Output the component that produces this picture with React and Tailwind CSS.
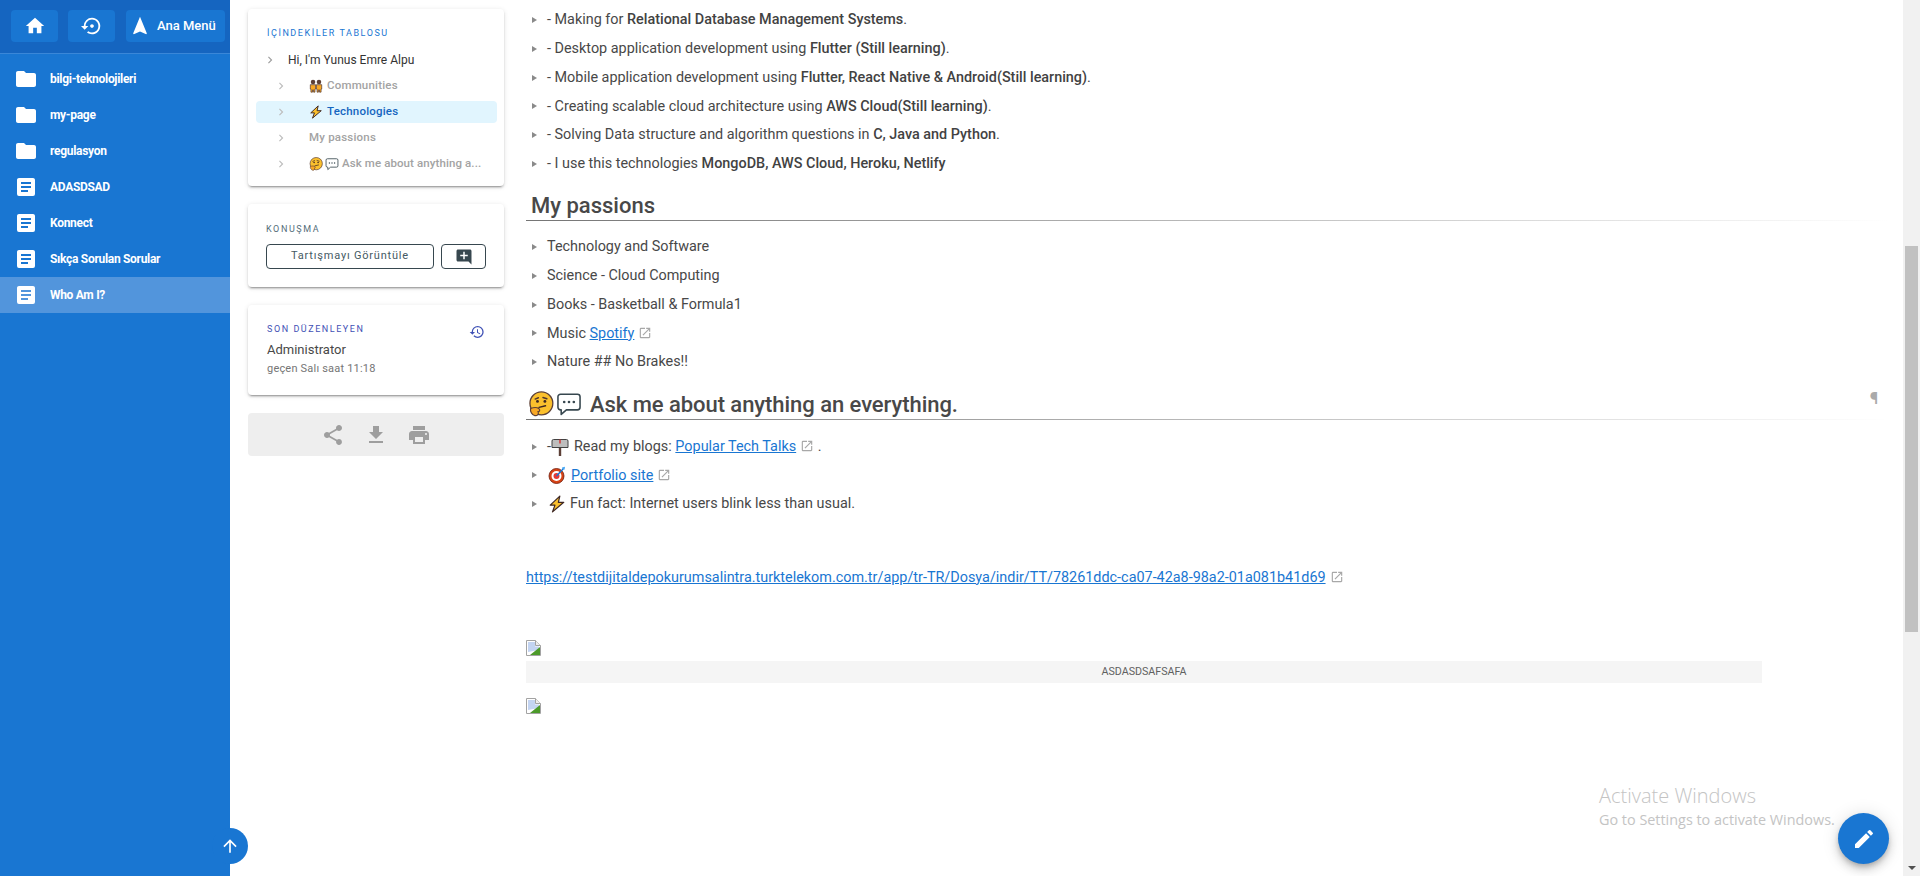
import React from "react";
import {
  MdHome, MdSettingsBackupRestore, MdNavigation, MdFolder, MdChevronRight, MdAddComment, MdHistory,
  MdShare, MdFileDownload, MdPrint, MdOpenInNew, MdEdit, MdArrowUpward,
} from "react-icons/md";

const Doc = ({ className }) => (
  <svg viewBox="0 0 24 24" className={className} fill="currentColor">
    <path d="M14 17H7v-2h7m3-2H7v-2h10m0-2H7V7h10m2-4H5c-1.11 0-2 .89-2 2v14a2 2 0 0 0 2 2h14a2 2 0 0 0 2-2V5c0-1.1-.9-2-2-2Z" />
  </svg>
);

const Bolt = ({ className }) => (
  <svg viewBox="0 0 16 16" className={className}>
    <path d="M10.5 1 2 9h4.2L4 15l10-8.5H9.2L10.5 1Z" fill="#fbc02d" stroke="#3e2723" strokeWidth="1.1" strokeLinejoin="round" />
  </svg>
);

const People = ({ className }) => (
  <svg viewBox="0 0 16 16" className={className}>
    <circle cx="4.6" cy="3.4" r="2.6" fill="#5d4037" />
    <circle cx="11.4" cy="3.4" r="2.6" fill="#5d4037" />
    <path d="M1.5 6.5h6v5H6.8v3.5H5.2v-2.5H4v2.5H2.2v-3.5h-.7v-5Z" fill="#f9a825" stroke="#4e342e" strokeWidth=".8" />
    <path d="M8.5 6.5h6v5h-.7v3.5H12v-2.5h-1.2v2.5H9.2v-3.5h-.7v-5Z" fill="#f9a825" stroke="#4e342e" strokeWidth=".8" />
  </svg>
);

const Thinking = ({ className }) => (
  <svg viewBox="0 0 20 20" className={className}>
    <circle cx="10.3" cy="9.5" r="8.8" fill="#fbc02d" stroke="#5d4037" strokeWidth="1" />
    <path d="M5.5 6.2 8 5.2M11.5 5l3 1" stroke="#4e342e" strokeWidth="1.1" fill="none" strokeLinecap="round" />
    <circle cx="7.3" cy="8" r="1.1" fill="#3e2723" />
    <circle cx="13" cy="8" r="1.1" fill="#3e2723" />
    <path d="M8.5 12.6 13.5 11.4" stroke="#3e2723" strokeWidth="1.1" strokeLinecap="round" />
    <path d="M2 13.5c2-.8 5-1 6.5.2 1 .9.3 2.2-.7 2.2 .7 1.6-.5 3.3-2.5 3-2.3-.4-3.8-3.3-3.3-5.4Z" fill="#f9a825" stroke="#5d4037" strokeWidth=".9" />
  </svg>
);

const Speech = ({ className }) => (
  <svg viewBox="0 0 20 20" className={className}>
    <path d="M3.5 2.5h13a2 2 0 0 1 2 2v8a2 2 0 0 1-2 2H8l-4 3.500v-3.500h-.5a2 2 0 0 1-2-2v-8a2 2 0 0 1 2-2Z" fill="#fff" stroke="#37474f" strokeWidth="1.2" strokeLinejoin="round" />
    <circle cx="6.3" cy="8.5" r="1" fill="#37474f" />
    <circle cx="10" cy="8.5" r="1" fill="#37474f" />
    <circle cx="13.7" cy="8.5" r="1" fill="#37474f" />
  </svg>
);

const Mailbox = ({ className }) => (
  <svg viewBox="0 0 18 18" className={className}>
    <rect x="7.8" y="9" width="2.4" height="9" fill="#5d4037" />
    <path d="M2.5 1.5h13A1.5 1.5 0 0 1 17 3v6.500H1V3a1.500 1.500 0 0 1 1.500-1.500Z" fill="#bdbdbd" stroke="#424242" strokeWidth="1" />
    <rect x="8.3" y="1.5" width="1.4" height="4" fill="#d32f2f" />
  </svg>
);

const Dart = ({ className }) => (
  <svg viewBox="0 0 18 18" className={className}>
    <circle cx="8.5" cy="10" r="7.5" fill="#d84315" stroke="#6d1b0b" strokeWidth=".8" />
    <circle cx="8.5" cy="10" r="5" fill="#fff" />
    <circle cx="8.5" cy="10" r="3" fill="#e53935" />
    <path d="M8.5 10 15.5 2.5" stroke="#1976d2" strokeWidth="1.4" />
    <path d="M14 1.5 17 .8l-.5 3-2-.8Z" fill="#42a5f5" />
  </svg>
);

const Broken = () => (
  <svg viewBox="0 0 15 16" className="block w-[15px] h-[16px]">
    <path d="M.5.5h9l5 5v10H.5Z" fill="#fff" stroke="#a3a3a3" />
    <path d="M9.5.5v5h5" fill="#eee" stroke="#a3a3a3" />
    <path d="M2 2h7v4.500h4V10L2 12Z" fill="#c3d4f2" />
    <path d="M4 15 14 7v8Z" fill="#4c9a2a" />
  </svg>
);

const Ext = () => <MdOpenInNew className="inline-block w-[14px] h-[14px] ml-[4px] text-[#a8a8a8] align-[-2px]" />;
const A = ({ children }) => <a className="text-[#1976d2] underline">{children}</a>;
const B = ({ children }) => <b className="font-medium text-[#424242]">{children}</b>;

const Li = ({ children }) => (
  <li className="flex items-center h-[28.8px] pl-[6px] whitespace-pre">
    <svg viewBox="0 0 5 6" className="w-[5px] h-[6px] mr-[10px] shrink-0"><path d="M0 0l5 3-5 3Z" fill="#8a8a8a" /></svg>
    {children}
  </li>
);

const NavItem = ({ icon: Icon, label, active }) => (
  <div className={`flex items-center h-9 pl-[14px] ${active ? "bg-[#5295dc]" : ""}`}>
    <Icon className="w-6 h-6 text-white shrink-0" />
    <span className="ml-3 text-[12px] font-bold tracking-[-0.3px] text-white">{label}</span>
  </div>
);

const shadow = "shadow-[0_3px_1px_-2px_rgba(0,0,0,0.2),0_2px_2px_0_rgba(0,0,0,0.14),0_1px_5px_0_rgba(0,0,0,0.12)]";

const TocSub = ({ active, children }) => (
  <div className={`flex items-center h-[22px] mt-1 rounded-[4px] pl-[18px] text-[11.5px] font-medium tracking-[0.2px] ${active ? "bg-[#e1f5fe] text-[#1565c0]" : "text-[#a3a3a3]"}`}>
    <MdChevronRight className="w-[14px] h-[14px] text-[#bdbdbd] shrink-0" />
    <span className="ml-[21px] flex items-center gap-[2px] whitespace-nowrap">{children}</span>
  </div>
);

export default function App() {
  return (
    <div className="relative flex h-[876px] w-[1920px] overflow-hidden bg-white text-[#484848] font-[Roboto,sans-serif]">
      <aside className="w-[230px] shrink-0 bg-[#1976d2]">
        <div className="flex items-start h-[54px] pt-[10px] pl-[11px] gap-[10px] bg-[#1565c0] border-b border-[#3a87d8]">
          <div className="w-[47px] h-8 rounded-[4px] bg-[#1976d2] flex items-center justify-center"><MdHome className="w-[22px] h-[22px] text-white" /></div>
          <div className="w-[47px] h-8 rounded-[4px] bg-[#1976d2] flex items-center justify-center"><MdSettingsBackupRestore className="w-[22px] h-[22px] text-white" /></div>
          <div className="w-[99px] h-8 ml-px rounded-[4px] bg-[#1976d2] flex items-center pl-[3px] text-white">
            <MdNavigation className="w-[22px] h-[22px]" />
            <span className="ml-[6px] text-[13px] font-medium">Ana Menü</span>
          </div>
        </div>
        <nav className="pt-[7px]">
          <NavItem icon={MdFolder} label="bilgi-teknolojileri" />
          <NavItem icon={MdFolder} label="my-page" />
          <NavItem icon={MdFolder} label="regulasyon" />
          <NavItem icon={Doc} label="ADASDSAD" />
          <NavItem icon={Doc} label="Konnect" />
          <NavItem icon={Doc} label="Sıkça Sorulan Sorular" />
          <NavItem icon={Doc} label="Who Am I?" active />
        </nav>
      </aside>

      <div className="w-[296px] shrink-0 pl-[18px] pr-[22px] pt-[9px]">
        <section className={`h-[177px] rounded-[4px] bg-white pt-[18px] pl-[8px] pr-[7px] ${shadow}`}>
          <div className="pl-[11px] h-3 flex items-center text-[9px] leading-none tracking-[1.55px] text-[#1976d2]">İÇİNDEKİLER TABLOSU</div>
          <div className="flex items-center h-[22px] mt-[10px] pl-[7px] text-[12px] text-[#333]">
            <MdChevronRight className="w-[14px] h-[14px] text-[#9e9e9e] shrink-0" />
            <span className="ml-[11px]">Hi, I'm Yunus Emre Alpu</span>
          </div>
          <TocSub><People className="w-[14px] h-[14px]" /><span className="ml-[2px]">Communities</span></TocSub>
          <TocSub active><Bolt className="w-[14px] h-[14px]" /><span className="ml-[2px]">Technologies</span></TocSub>
          <TocSub>My passions</TocSub>
          <TocSub><Thinking className="w-[14px] h-[14px]" /><Speech className="w-[14px] h-[14px]" /><span className="ml-[1px] tracking-[0.1px]">Ask me about anything a...</span></TocSub>
        </section>

        <section className={`h-[83px] mt-[18px] rounded-[4px] bg-white pt-[20px] pl-[18px] ${shadow}`}>
          <div className="h-[10px] flex items-center text-[9px] leading-none tracking-[1.6px] text-[#546e7a]">KONUŞMA</div>
          <div className="flex gap-[7px] mt-[10px]">
            <div className="w-[168px] h-[25px] rounded-[4px] border border-[#37474f] flex items-center justify-center text-[11px] tracking-[0.8px] text-[#455a64]">Tartışmayı Görüntüle</div>
            <div className="w-[45px] h-[25px] rounded-[4px] border border-[#37474f] flex items-center justify-center"><MdAddComment className="w-[18px] h-[18px] text-[#37474f]" /></div>
          </div>
        </section>

        <section className={`flex h-[90px] mt-[18px] rounded-[4px] bg-white pt-[19px] pl-[19px] pr-[19px] ${shadow}`}>
          <div className="flex-1">
            <div className="h-[10px] flex items-center text-[9px] leading-none tracking-[1.55px] text-[#3f51b5]">SON DÜZENLEYEN</div>
            <div className="mt-[6px] text-[13px] leading-[20px] text-[#484848]">Administrator</div>
            <div className="mt-[1px] text-[11px] leading-[16px] text-[#757575] tracking-[0.2px]">geçen Salı saat 11:18</div>
          </div>
          <MdHistory className="w-4 h-4 text-[#3f51b5]" />
        </section>

        <div className="flex items-center justify-center gap-[19px] h-[43px] mt-[18px] rounded-[4px] bg-[#eeeeee] text-[#9e9e9e]">
          <MdShare className="w-6 h-6" />
          <MdFileDownload className="w-6 h-6" />
          <MdPrint className="w-6 h-6" />
        </div>
      </div>

      <main className="flex-1 min-w-0 pt-[5.6px] pr-[13px] text-[14.4px]">
        <ul>
          <Li>- Making for <B>Relational Database Management Systems</B>.</Li>
          <Li>- Desktop application development using <B>Flutter (Still learning)</B>.</Li>
          <Li>- Mobile application development using <B>Flutter, React Native &amp; Android(Still learning)</B>.</Li>
          <Li>- Creating scalable cloud architecture using <B>AWS Cloud(Still learning)</B>.</Li>
          <Li>- Solving Data structure and algorithm questions in <B>C, Java and Python</B>.</Li>
          <Li>- I use this technologies <B>MongoDB, AWS Cloud, Heroku, Netlify</B></Li>
        </ul>
        <h2 className="flex items-center h-[41.6px] pl-[5px] pt-[13px] text-[22px] font-medium">My passions</h2>
        <div className="h-px bg-linear-to-r from-[#757575] to-transparent" />
        <ul className="mt-[11.6px]">
          <Li>Technology and Software</Li>
          <Li>Science - Cloud Computing</Li>
          <Li>Books - Basketball &amp; Formula1</Li>
          <Li><span>Music <A>Spotify</A><Ext /></span></Li>
          <Li>Nature ## No Brakes!!</Li>
        </ul>
        <h2 className="relative flex items-center h-[42px] pl-[2px] pt-[13px] text-[22px] font-medium">
          <Thinking className="w-[26px] h-[26px]" />
          <Speech className="w-[26px] h-[26px] ml-[2px]" />
          <span className="ml-[8px] tracking-[-0.05px]">Ask me about anything an everything.</span>
          <span className="absolute right-[12px] top-[9px] text-[17px] font-bold text-[#aaaaaa]">¶</span>
        </h2>
        <div className="h-px bg-linear-to-r from-[#757575] to-transparent" />
        <ul className="mt-[12.6px]">
          <Li>-<Mailbox className="w-[18px] h-[18px]" /><span className="ml-[5px]">Read my blogs: <A>Popular Tech Talks</A><Ext /> .</span></Li>
          <Li><span className="ml-[1px] flex"><Dart className="w-[18px] h-[18px]" /></span><span className="ml-[5px]"><A>Portfolio site</A><Ext /></span></Li>
          <Li><span className="ml-[1px] flex"><Bolt className="w-[18px] h-[18px]" /></span><span className="ml-[4px]">Fun fact: Internet users blink less than usual.</span></Li>
        </ul>
        <p className="mt-[48px] leading-[21px]">
          <A>https://testdijitaldepokurumsalintra.turktelekom.com.tr/app/tr-TR/Dosya/indir/TT/78261ddc-ca07-42a8-98a2-01a081b41d69</A><Ext />
        </p>
        <div className="mt-[52px]"><Broken /></div>
        <div className="w-[1236px] h-[22px] mt-[5px] bg-[#f5f5f5] flex items-center justify-center text-[10.7px] text-[#616161]">ASDASDSAFSAFA</div>
        <div className="mt-[15px]"><Broken /></div>
      </main>

      <div className="relative w-[17px] shrink-0 bg-[#f1f1f1]">
        <div className="absolute left-[2px] top-[246px] w-[13px] h-[386px] bg-[#c1c1c1]" />
        <svg viewBox="0 0 8 4" className="absolute left-[5px] bottom-[6px] w-2 h-1"><path d="M0 0h8L4 4Z" fill="#505050" /></svg>
      </div>

      <div className="absolute left-[212px] top-[828px] w-9 h-9 rounded-full bg-[#1976d2] flex items-center justify-center">
        <MdArrowUpward className="w-[20px] h-[20px] text-white" />
      </div>

      <div className="absolute left-[1599px] top-[782px] text-[#c4c4c4] font-['Open_Sans',sans-serif] pointer-events-none">
        <div className="text-[20px] leading-[28px] font-light">Activate Windows</div>
        <div className="text-[14.4px] leading-[20px]">Go to Settings to activate Windows.</div>
      </div>

      <div className="absolute left-[1838px] top-[813px] w-[51px] h-[51px] rounded-full bg-[#1976d2] flex items-center justify-center shadow-[0_3px_5px_-1px_rgba(0,0,0,0.2),0_6px_10px_0_rgba(0,0,0,0.14),0_1px_18px_0_rgba(0,0,0,0.12)]">
        <MdEdit className="w-6 h-6 text-white" />
      </div>
    </div>
  );
}
